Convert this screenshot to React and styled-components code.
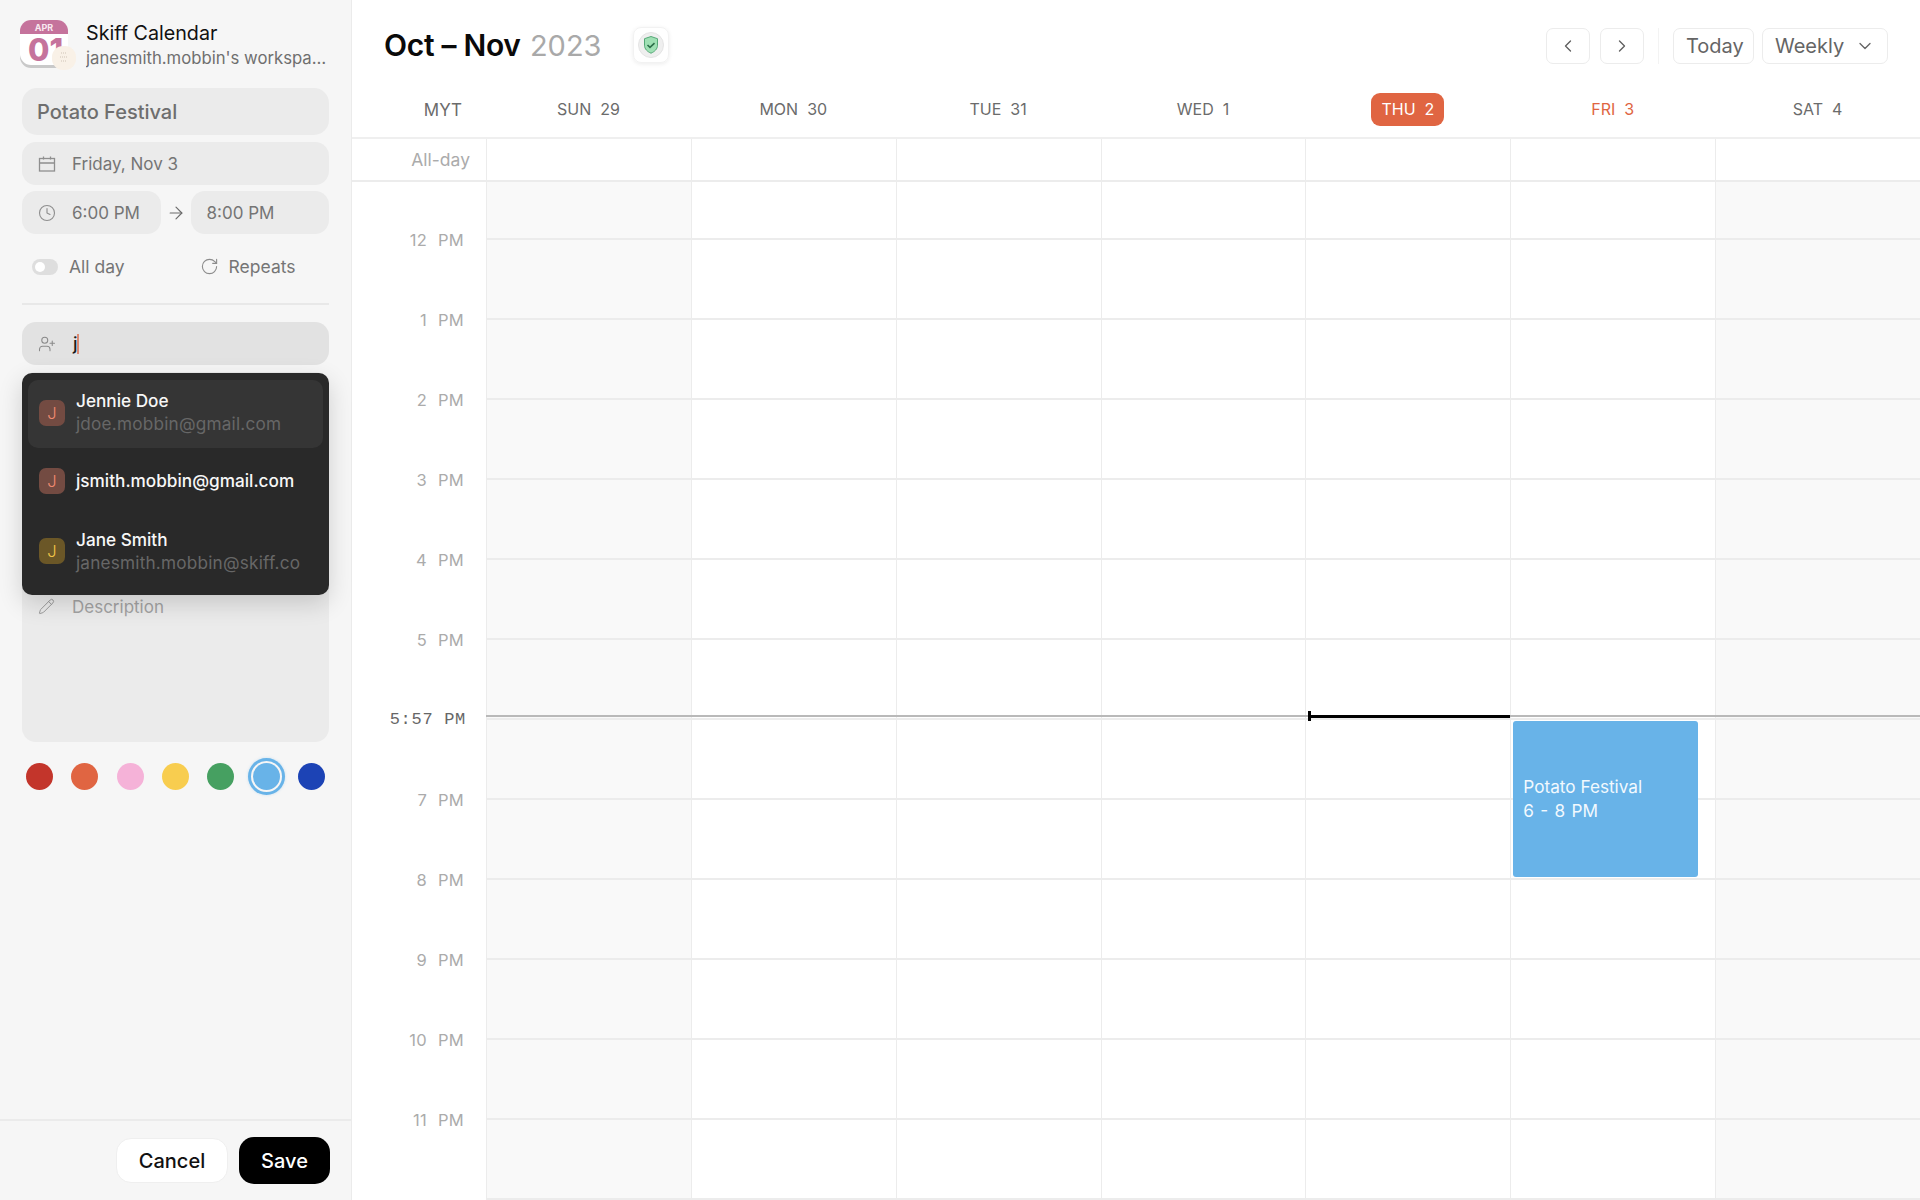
import styled, { createGlobalStyle } from "styled-components";
import { ArrowRight, ChevronDown, ChevronLeft, ChevronRight, Clock, RotateCw, UserPlus, Pencil } from "lucide-react";

const days = [
  { label: "SUN  29", weekend: true },
  { label: "MON  30" },
  { label: "TUE  31" },
  { label: "WED  1" },
  { label: "THU  2", today: true },
  { label: "FRI  3", next: true },
  { label: "SAT  4", weekend: true },
];
const hours = ["12 PM", "1 PM", "2 PM", "3 PM", "4 PM", "5 PM", "5:57 PM", "7 PM", "8 PM", "9 PM", "10 PM", "11 PM"];
const swatches = ["#c3352b", "#e06542", "#f5b2d8", "#f8cd4f", "#46a061", "#68b3e8", "#1c43b5"];
const people = [
  { name: "Jennie Doe", mail: "jdoe.mobbin@gmail.com", tone: "red", height: 68, active: true },
  { name: "jsmith.mobbin@gmail.com", tone: "red", height: 65 },
  { name: "Jane Smith", mail: "janesmith.mobbin@skiff.co", tone: "yellow", height: 75 },
];

export default function App() {
  return (
    <>
      <Global />
      <Page>
        <Sidebar>
          <SideBody>
            <Brand>
              <AppLogo />
              <BrandText>
                <BrandName>Skiff Calendar</BrandName>
                <BrandSub>janesmith.mobbin's workspace</BrandSub>
              </BrandText>
            </Brand>
            <TitleField>Potato Festival</TitleField>
            <Field>
              <CalendarGlyph />
              Friday, Nov 3
            </Field>
            <TimeRow>
              <Field $grow>
                <Clock size={18} strokeWidth={1.5} />
                6:00 PM
              </Field>
              <ArrowRight size={20} strokeWidth={1.4} color="#6b6b6b" />
              <Field $grow>8:00 PM</Field>
            </TimeRow>
            <OptionsRow>
              <Option>
                <Toggle />
                All day
              </Option>
              <Option>
                <RotateCw size={19} strokeWidth={1.4} color="#8c8c8c" />
                Repeats
              </Option>
            </OptionsRow>
            <AttendeeWrap>
              <AttendeeField>
                <UserPlus size={18} strokeWidth={1.4} />
                <Typed>j<Caret /></Typed>
              </AttendeeField>
              <Dropdown>
                {people.map((p) => (
                  <PersonRow key={p.name} $active={p.active} $height={p.height}>
                    <Avatar $tone={p.tone}>J</Avatar>
                    <PersonText $active={p.active}>
                      <PersonName>{p.name}</PersonName>
                      {p.mail && <PersonMail>{p.mail}</PersonMail>}
                    </PersonText>
                  </PersonRow>
                ))}
              </Dropdown>
            </AttendeeWrap>
            <DescField>
              <Pencil size={17} strokeWidth={1.4} />
              Description
            </DescField>
            <Swatches>
              {swatches.map((c, i) => (
                <Swatch key={c} $color={c} $selected={i === 5} />
              ))}
            </Swatches>
          </SideBody>
          <SideFooter>
            <CancelButton>Cancel</CancelButton>
            <SaveButton>Save</SaveButton>
          </SideFooter>
        </Sidebar>

        <Main>
          <TopBar>
            <Heading>
              Oct – Nov <Year>2023</Year>
            </Heading>
            <ShieldButton><ShieldGlyph /></ShieldButton>
            <TopActions>
              <NavGroup>
                <NavButton><ChevronLeft size={20} strokeWidth={1.6} /></NavButton>
                <NavButton><ChevronRight size={20} strokeWidth={1.6} /></NavButton>
              </NavGroup>
              <ActionSep />
              <TextButton $width={81}>Today</TextButton>
              <TextButton $width={126}>
                Weekly
                <ChevronDown size={20} strokeWidth={1.6} />
              </TextButton>
            </TopActions>
          </TopBar>

          <DayHeader>
            <ZoneLabel>MYT</ZoneLabel>
            {days.map((d) => (
              <DayLabel key={d.label} $today={d.today} $next={d.next}>
                <span>{d.label}</span>
              </DayLabel>
            ))}
          </DayHeader>

          <AllDayRow>
            <AllDayLabel>All-day</AllDayLabel>
            {days.map((d) => (
              <AllDayCell key={d.label} />
            ))}
          </AllDayRow>

          <TimeGrid>
            <Gutter>
              {hours.map((h, i) => (
                <GutterCell key={h} $first={i === 0}>
                  <HourLabel $now={h === "5:57 PM"}>{h}</HourLabel>
                </GutterCell>
              ))}
            </Gutter>
            {days.map((d) => (
              <DayColumn key={d.label} $weekend={d.weekend}>
                {[...hours, "end"].map((h, i) => (
                  <Slot key={h} $first={i === 0} />
                ))}
                {d.today && <NowMark />}
                {d.next && (
                  <EventCard>
                    <div>Potato Festival</div>
                    <EventTime>6 - 8 PM</EventTime>
                  </EventCard>
                )}
              </DayColumn>
            ))}
            <NowLine />
          </TimeGrid>
        </Main>
      </Page>
    </>
  );
}

function AppLogo() {
  return (
    <LogoWrap>
      <svg width="56" height="50" viewBox="0 0 56 50">
        <rect x="0" y="1" width="48" height="47" rx="11" fill="#c9c9c9" />
        <rect x="0" y="0" width="48" height="45" rx="11" fill="#fff" />
        <path d="M0 14V11A11 11 0 0 1 11 0H37A11 11 0 0 1 48 11V14Z" fill="#c5739c" />
        <text x="24" y="11" textAnchor="middle" fontFamily="Inter, sans-serif" fontSize="9" fontWeight="700" fill="#f8e8f0">APR</text>
        <text x="8" y="41" fontFamily="Inter, sans-serif" fontSize="31" fontWeight="800" fill="#c5739c">01</text>
        <rect x="32" y="26" width="24" height="24" rx="11" fill="#f9f1e7" />
        <path d="M41 33h5M40 37h7M41 41h5" stroke="#cfc3b6" strokeWidth="1" strokeDasharray="1 1" />
      </svg>
    </LogoWrap>
  );
}

function CalendarGlyph() {
  return (
    <svg width="18" height="18" viewBox="0 0 18 18" fill="none" stroke="currentColor" strokeWidth="1.3">
      <rect x="1.5" y="3.5" width="15" height="12.5" />
      <path d="M1.5 8h15M5.5 1.5v3M12.5 1.5v3" />
    </svg>
  );
}

function ShieldGlyph() {
  return (
    <svg width="26" height="26" viewBox="0 0 26 26" fill="none">
      <circle cx="13" cy="13" r="12.5" fill="#efefef" stroke="#e4e4e4" />
      <path d="M13 4.500l6.500 2.200v6.500c0 3.800-2.800 6.400-6.500 8-3.700-1.600-6.500-4.200-6.500-8V6.700z" fill="#9fe0b4" stroke="#55a877" strokeWidth="1" />
      <path d="M9.500 13l2.500 2.400 4.500-4.200" stroke="#2c6e49" strokeWidth="1.600" />
    </svg>
  );
}

const Global = createGlobalStyle`
  html, body {
    margin: 0;
    padding: 0;
    background: #fff;
    font-family: Inter, "Liberation Sans", sans-serif;
  }
  * { box-sizing: border-box; }
`;

const Page = styled.div`
  display: flex;
  height: 100vh;
  overflow: hidden;
`;

const Sidebar = styled.aside`
  width: 352px;
  flex: none;
  display: flex;
  flex-direction: column;
  background: #f6f6f6;
  border-right: 1px solid #ebebeb;
`;

const SideBody = styled.div`
  flex: 1;
  padding: 20px 22px 0 22px;
  display: flex;
  flex-direction: column;
  border-bottom: 2px solid #ebebeb;
`;

const Brand = styled.div`
  display: flex;
  align-items: flex-start;
  height: 68px;
  margin-left: -2px;
  gap: 10px;
`;

const LogoWrap = styled.div`
  width: 56px;
  height: 50px;
  flex: none;
`;

const BrandText = styled.div`
  min-width: 0;
  width: 243px;
`;

const BrandName = styled.div`
  font-size: 19.7px;
  line-height: 26px;
  color: #111;
`;

const BrandSub = styled.div`
  font-size: 16.7px;
  line-height: 24px;
  color: #6f6f6f;
  white-space: nowrap;
  overflow: hidden;
  text-overflow: ellipsis;
`;

const TitleField = styled.div`
  height: 47px;
  display: flex;
  align-items: center;
  padding-left: 15px;
  border-radius: 15px;
  background: #ebebeb;
  font-size: 20px;
  font-weight: 500;
  color: #6e6e6e;
`;

const Field = styled.div`
  height: 43px;
  margin-top: 7px;
  display: flex;
  align-items: center;
  gap: 16px;
  padding-left: 16px;
  border-radius: 14px;
  background: #ebebeb;
  font-size: 17px;
  color: #757575;
  flex: ${(p) => (p.$grow ? "1" : "none")};
  svg { color: #8f8f8f; flex: none; }
`;

const TimeRow = styled.div`
  display: flex;
  align-items: flex-end;
  gap: 5px;
  > svg { margin-bottom: 11px; flex: none; }
  ${Field} { margin-top: 6px; }
`;

const OptionsRow = styled.div`
  height: 71px;
  display: flex;
  align-items: center;
  gap: 75px;
  padding: 0 0 4px 10px;
  border-bottom: 2px solid #e8e8e8;
  margin-bottom: 17px;
`;

const Option = styled.div`
  display: flex;
  align-items: center;
  gap: 10px;
  font-size: 17.5px;
  color: #757575;
  &:first-child { gap: 11px; }
`;

const Toggle = styled.span`
  width: 26px;
  height: 16px;
  border-radius: 8px;
  background: #dedede;
  display: inline-block;
  position: relative;
  &::after {
    content: "";
    position: absolute;
    left: 3px;
    top: 3px;
    width: 10px;
    height: 10px;
    border-radius: 50%;
    background: #fff;
  }
`;

const AttendeeWrap = styled.div`
  position: relative;
`;

const AttendeeField = styled.div`
  height: 43px;
  display: flex;
  align-items: center;
  gap: 17px;
  padding-left: 16px;
  border-radius: 14px;
  background: #e2e2e2;
  svg { color: #8a8a8a; flex: none; }
`;

const Typed = styled.span`
  font-size: 18px;
  font-weight: 500;
  color: #1a1a1a;
  display: inline-flex;
  align-items: center;
`;

const Caret = styled.span`
  display: inline-block;
  width: 2px;
  height: 20px;
  margin-left: -1px;
  background: #dd8a72;
`;

const Dropdown = styled.div`
  position: absolute;
  z-index: 5;
  top: 51px;
  left: 0;
  right: 0;
  padding: 7px 6px;
  background: #292929;
  border-radius: 10px;
  box-shadow: 0 8px 24px rgba(0, 0, 0, 0.16);
`;

const PersonRow = styled.div`
  height: ${(p) => p.$height}px;
  display: flex;
  align-items: center;
  gap: 11px;
  padding: 0 0 ${(p) => (p.$active ? "3px" : "0")} 11px;
  border-radius: 10px;
  background: ${(p) => (p.$active ? "#353535" : "transparent")};
`;

const PersonText = styled.div`
  padding-bottom: ${(p) => (p.$active ? "1px" : "0")};
`;

const Avatar = styled.span`
  width: 26px;
  height: 26px;
  flex: none;
  display: flex;
  align-items: center;
  justify-content: center;
  border-radius: 7px;
  font-size: 16.5px;
  font-weight: 300;
  background: ${(p) => (p.$tone === "yellow" ? "#6b5727" : "#734b42")};
  color: ${(p) => (p.$tone === "yellow" ? "#f0c548" : "#ef8a70")};
`;

const PersonName = styled.div`
  font-size: 17.2px;
  font-weight: 500;
  line-height: 23px;
  color: #f7f7f7;
  white-space: nowrap;
`;

const PersonMail = styled.div`
  font-size: 17.2px;
  letter-spacing: 0.2px;
  line-height: 23px;
  color: #676767;
  white-space: nowrap;
`;

const DescField = styled.div`
  height: 370px;
  margin-top: 7px;
  padding: 224px 0 0 16px;
  display: flex;
  align-items: flex-start;
  gap: 17px;
  border-radius: 14px;
  background: #ebebeb;
  font-size: 17px;
  line-height: 22px;
  color: #a3a3a3;
  svg { color: #9a9a9a; flex: none; margin-top: 2px; }
`;

const Swatches = styled.div`
  display: flex;
  justify-content: space-between;
  padding: 21px 4px 0;
`;

const Swatch = styled.span`
  width: 27px;
  height: 27px;
  border-radius: 50%;
  background: ${(p) => p.$color};
  box-shadow: ${(p) =>
    p.$selected ? `0 0 0 2px #f6f6f6, 0 0 0 5px ${p.$color}, 0 0 3px 5px ${p.$color}55` : "none"};
`;

const SideFooter = styled.div`
  height: 79px;
  flex: none;
  display: flex;
  align-items: center;
  justify-content: flex-end;
  gap: 11px;
  padding-right: 21px;
`;

const CancelButton = styled.button`
  width: 112px;
  height: 45px;
  border: 1px solid #efefef;
  border-radius: 15px;
  background: #fff;
  font: 500 20px Inter, sans-serif;
  color: #111;
`;

const SaveButton = styled.button`
  width: 91px;
  height: 47px;
  border: none;
  border-radius: 15px;
  background: #000;
  font: 500 20px Inter, sans-serif;
  color: #fff;
`;

const Main = styled.main`
  flex: 1;
  min-width: 0;
  display: flex;
  flex-direction: column;
`;

const TopBar = styled.div`
  height: 90px;
  flex: none;
  display: flex;
  align-items: center;
  padding: 0 32px;
`;

const Heading = styled.h1`
  margin: 0;
  font-size: 30px;
  font-weight: 600;
  color: #0a0a0a;
  letter-spacing: -0.3px;
`;

const Year = styled.span`
  margin-left: 2px;
  font-size: 29px;
  font-weight: 400;
  letter-spacing: 0;
  color: #a9a9a9;
`;

const ShieldButton = styled.div`
  width: 36px;
  height: 36px;
  margin-left: 31px;
  display: flex;
  align-items: center;
  justify-content: center;
  border: 1px solid #f2f2f2;
  border-radius: 8px;
  box-shadow: 0 1px 4px rgba(0, 0, 0, 0.08);
`;

const TopActions = styled.div`
  margin: 2px 0 0 auto;
  display: flex;
  align-items: center;
  gap: 8px;
`;

const NavGroup = styled.div`
  display: flex;
  gap: 10px;
`;

const NavButton = styled.button`
  width: 44px;
  height: 36px;
  padding: 0;
  display: flex;
  align-items: center;
  justify-content: center;
  background: #fff;
  border: 1px solid #ececec;
  border-radius: 7px;
  color: #5f5f5f;
`;

const ActionSep = styled.span`
  width: 1px;
  height: 36px;
  margin: 0 6px;
  background: #f3f3f3;
`;

const TextButton = styled.button`
  width: ${(p) => p.$width}px;
  height: 36px;
  padding: 0 12px;
  display: flex;
  align-items: center;
  justify-content: space-between;
  background: #fff;
  border: 1px solid #ececec;
  border-radius: 7px;
  font: 400 20px Inter, sans-serif;
  color: #656565;
  white-space: nowrap;
`;

const DayHeader = styled.div`
  height: 49px;
  flex: none;
  display: grid;
  grid-template-columns: 134px repeat(7, 1fr);
  align-items: center;
  padding-bottom: 8px;
  border-bottom: 2px solid #efefef;
`;

const ZoneLabel = styled.div`
  text-align: right;
  padding-right: 24px;
  font-size: 17px;
  color: #6b6b6b;
`;

const DayLabel = styled.div`
  text-align: center;
  span {
    display: inline-block;
    padding: 5px 10px;
    height: 33px;
    line-height: 23px;
    white-space: pre;
    font-size: 16px;
    border-radius: 9px;
    background: ${(p) => (p.$today ? "#e06542" : "transparent")};
    color: ${(p) => (p.$today ? "#fff" : p.$next ? "#e06542" : "#6b6b6b")};
  }
`;

const AllDayRow = styled.div`
  height: 43px;
  flex: none;
  display: grid;
  grid-template-columns: 134px repeat(7, 1fr);
  border-bottom: 2px solid #ececec;
`;

const AllDayLabel = styled.div`
  align-self: center;
  text-align: right;
  padding-right: 16px;
  font-size: 17.5px;
  color: #ababab;
`;

const AllDayCell = styled.div`
  border-left: 1px solid #ececec;
`;

const TimeGrid = styled.div`
  flex: 1;
  position: relative;
  display: grid;
  grid-template-columns: 134px repeat(7, 1fr);
  overflow: hidden;
`;

const Gutter = styled.div`
  display: flex;
  flex-direction: column;
`;

const GutterCell = styled.div`
  height: ${(p) => (p.$first ? "58px" : "80px")};
  flex: none;
  display: flex;
  align-items: flex-end;
  justify-content: flex-end;
  padding-right: 22px;
`;

const HourLabel = styled.span`
  white-space: pre;
  line-height: 20px;
  transform: translateY(10px);
  font-family: ${(p) => (p.$now ? '"Liberation Mono", monospace' : "Inter, sans-serif")};
  font-size: ${(p) => (p.$now ? "17px" : "16.5px")};
  letter-spacing: ${(p) => (p.$now ? "0.7px" : "0.3px")};
  word-spacing: ${(p) => (p.$now ? "0" : "6px")};
  color: ${(p) => (p.$now ? "#666" : "#ababab")};
  margin-right: ${(p) => (p.$now ? "-2px" : "0")};
`;

const DayColumn = styled.div`
  position: relative;
  display: flex;
  flex-direction: column;
  border-left: 1px solid #ececec;
  background: ${(p) => (p.$weekend ? "#f9f9f9" : "#fff")};
`;

const Slot = styled.div`
  height: ${(p) => (p.$first ? "58px" : "80px")};
  flex: none;
  border-bottom: 2px solid #ececec;
`;

const NowLine = styled.div`
  position: absolute;
  left: 134px;
  right: 0;
  top: 533px;
  height: 2px;
  background: #b9b9b9;
`;

const NowMark = styled.div`
  position: absolute;
  z-index: 2;
  left: 2px;
  right: 0;
  top: 533px;
  height: 3px;
  background: #000;
  &::before {
    content: "";
    position: absolute;
    left: 0;
    top: -4px;
    width: 3px;
    height: 10px;
    background: #000;
  }
`;

const EventCard = styled.div`
  position: absolute;
  z-index: 3;
  left: 2px;
  right: 17px;
  top: 539px;
  height: 156px;
  padding-left: 10px;
  display: flex;
  flex-direction: column;
  justify-content: center;
  border-radius: 3px;
  background: #68b3e8;
  font-size: 17.2px;
  line-height: 24px;
  color: #f2f9fe;
  white-space: pre;
`;

const EventTime = styled.div`
  word-spacing: 1.5px;
`;
